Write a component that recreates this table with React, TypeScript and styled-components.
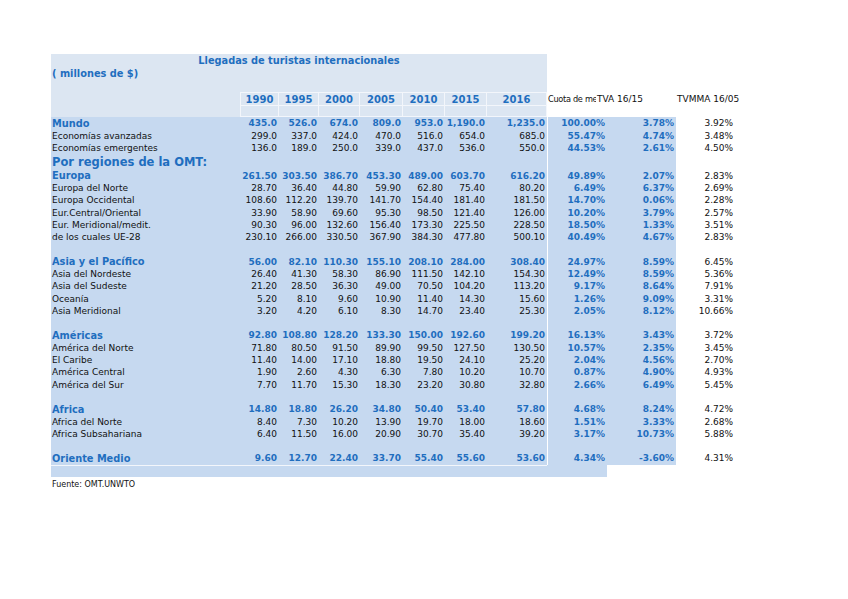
import React from 'react';
import styled, { createGlobalStyle, css } from 'styled-components';

const GlobalStyle = createGlobalStyle`
  html, body { margin: 0; padding: 0; background: #ffffff; }
  body { font-family: "DejaVu Sans", "Noto Sans", sans-serif; color: #111; }
`;

const LIGHT = '#dce6f2';
const DARK = '#c6d9f0';
const BLUE = '#1f6ebf';
const LINE = '#f3f6fb';
const COLS = '189px 39px 40px 41px 43px 42px 42px 60px 60px 69px 59px';

const Page = styled.div`
  padding: 54px 0 40px 51px;
  width: 760px;
`;

const TitleBlock = styled.div`
  width: 496px;
  background: ${LIGHT};
  display: flex;
  flex-direction: column;
`;

const TitleLine = styled.div`
  height: 13px;
  line-height: 13px;
  text-align: center;
  font-size: 9.8px;
  font-weight: bold;
  color: ${BLUE};
  white-space: nowrap;
`;

const UnitLine = styled.div`
  height: 13px;
  line-height: 13px;
  padding-left: 1px;
  font-size: 9.8px;
  font-weight: bold;
  color: ${BLUE};
  white-space: nowrap;
`;

const Spacer = styled.div`
  height: 12px;
`;

const GridRow = styled.div<{ $h: number }>`
  display: grid;
  grid-template-columns: ${COLS};
  height: ${(p) => p.$h}px;
`;

const HeadLabel = styled.div`
  background: ${LIGHT};
`;

const YearHead = styled.div<{ $first?: boolean; $sub?: boolean }>`
  background: ${LIGHT};
  border-top: 1px solid ${LINE};
  border-right: 1px solid ${LINE};
  ${(p) => p.$first && css`border-left: 1px solid ${LINE};`}
  ${(p) => p.$sub && css`border-bottom: 1px solid ${LINE};`}
  display: flex;
  align-items: center;
  justify-content: center;
  font-size: 10px;
  font-weight: bold;
  color: ${BLUE};
`;

const ColHead = styled.div<{ $shift?: number; $clip?: number }>`
  display: flex;
  align-items: center;
  font-size: 9px;
  color: #111;
  white-space: nowrap;
  padding-left: 1px;
  margin-left: ${(p) => (p.$shift ? `${p.$shift}px` : '0')};
  ${(p) =>
    p.$clip &&
    css`
      width: ${p.$clip}px;
      overflow: hidden;
      font-size: 8.2px;
      letter-spacing: -0.3px;
    `}
`;

const Cell = styled.div<{
  $bg?: boolean;
  $right?: boolean;
  $strong?: boolean;
  $divider?: boolean;
  $size?: number;
}>`
  display: flex;
  align-items: center;
  justify-content: ${(p) => (p.$right ? 'flex-end' : 'flex-start')};
  padding: ${(p) => (p.$right ? '0 2px 0 0' : '0 0 0 1px')};
  background: ${(p) => (p.$bg ? DARK : 'transparent')};
  ${(p) => p.$divider && css`border-left: 1px solid #ffffff;`}
  font-size: ${(p) => p.$size ?? 9}px;
  font-weight: ${(p) => (p.$strong ? 'bold' : 'normal')};
  color: ${(p) => (p.$strong ? BLUE : '#111')};
  white-space: nowrap;
  overflow: visible;
`;

const BandCell = styled.div<{ $line?: boolean }>`
  background: ${DARK};
  ${(p) => p.$line && css`border-top: 1px solid ${LINE};`}
`;

const Source = styled.div`
  height: 13px;
  display: flex;
  align-items: center;
  padding-left: 1px;
  margin-top: 1px;
  font-size: 8px;
  color: #111;
`;

type Kind = 'main' | 'sub' | 'section' | 'blank';
interface Row {
  kind: Kind;
  label?: string;
  vals?: string[];
  cuota?: string;
  tva?: string;
  tvmma?: string;
  h: number;
}

const R = 12.3;
const mk = (
  kind: Kind,
  label: string,
  v: string,
  cuota: string,
  tva: string,
  tvmma: string,
  h = R
): Row => ({ kind, label, vals: v.split(' '), cuota, tva, tvmma, h });
const blank = (): Row => ({ kind: 'blank', h: R });

const rows: Row[] = [
  mk('main', 'Mundo', '435.0 526.0 674.0 809.0 953.0 1,190.0 1,235.0', '100.00%', '3.78%', '3.92%', 12.6),
  mk('sub', 'Economías avanzadas', '299.0 337.0 424.0 470.0 516.0 654.0 685.0', '55.47%', '4.74%', '3.48%', 12.6),
  mk('sub', 'Economías emergentes', '136.0 189.0 250.0 339.0 437.0 536.0 550.0', '44.53%', '2.61%', '4.50%', 12.6),
  { kind: 'section', label: 'Por regiones de la OMT:', h: 14.7 },
  mk('main', 'Europa', '261.50 303.50 386.70 453.30 489.00 603.70 616.20', '49.89%', '2.07%', '2.83%'),
  mk('sub', 'Europa del Norte', '28.70 36.40 44.80 59.90 62.80 75.40 80.20', '6.49%', '6.37%', '2.69%'),
  mk('sub', 'Europa Occidental', '108.60 112.20 139.70 141.70 154.40 181.40 181.50', '14.70%', '0.06%', '2.28%'),
  mk('sub', 'Eur.Central/Oriental', '33.90 58.90 69.60 95.30 98.50 121.40 126.00', '10.20%', '3.79%', '2.57%'),
  mk('sub', 'Eur. Meridional/medit.', '90.30 96.00 132.60 156.40 173.30 225.50 228.50', '18.50%', '1.33%', '3.51%'),
  mk('sub', 'de los cuales UE-28', '230.10 266.00 330.50 367.90 384.30 477.80 500.10', '40.49%', '4.67%', '2.83%'),
  blank(),
  mk('main', 'Asia y el Pacífico', '56.00 82.10 110.30 155.10 208.10 284.00 308.40', '24.97%', '8.59%', '6.45%'),
  mk('sub', 'Asia del Nordeste', '26.40 41.30 58.30 86.90 111.50 142.10 154.30', '12.49%', '8.59%', '5.36%'),
  mk('sub', 'Asia del Sudeste', '21.20 28.50 36.30 49.00 70.50 104.20 113.20', '9.17%', '8.64%', '7.91%'),
  mk('sub', 'Oceanía', '5.20 8.10 9.60 10.90 11.40 14.30 15.60', '1.26%', '9.09%', '3.31%'),
  mk('sub', 'Asia Meridional', '3.20 4.20 6.10 8.30 14.70 23.40 25.30', '2.05%', '8.12%', '10.66%'),
  blank(),
  mk('main', 'Américas', '92.80 108.80 128.20 133.30 150.00 192.60 199.20', '16.13%', '3.43%', '3.72%'),
  mk('sub', 'América del Norte', '71.80 80.50 91.50 89.90 99.50 127.50 130.50', '10.57%', '2.35%', '3.45%'),
  mk('sub', 'El Caribe', '11.40 14.00 17.10 18.80 19.50 24.10 25.20', '2.04%', '4.56%', '2.70%'),
  mk('sub', 'América Central', '1.90 2.60 4.30 6.30 7.80 10.20 10.70', '0.87%', '4.90%', '4.93%'),
  mk('sub', 'América del Sur', '7.70 11.70 15.30 18.30 23.20 30.80 32.80', '2.66%', '6.49%', '5.45%'),
  blank(),
  mk('main', 'Africa', '14.80 18.80 26.20 34.80 50.40 53.40 57.80', '4.68%', '8.24%', '4.72%'),
  mk('sub', 'Africa del Norte', '8.40 7.30 10.20 13.90 19.70 18.00 18.60', '1.51%', '3.33%', '2.68%'),
  mk('sub', 'Africa Subsahariana', '6.40 11.50 16.00 20.90 30.70 35.40 39.20', '3.17%', '10.73%', '5.88%'),
  blank(),
  mk('main', 'Oriente Medio', '9.60 12.70 22.40 33.70 55.40 55.60 53.60', '4.34%', '-3.60%', '4.31%'),
];

const YEARS = ['1990', '1995', '2000', '2005', '2010', '2015', '2016'];

const DataRow: React.FC<{ row: Row }> = ({ row }) => {
  const main = row.kind === 'main';
  if (row.kind === 'section') {
    return (
      <GridRow $h={row.h}>
        <Cell $bg $strong $size={11.5}>{row.label}</Cell>
        {YEARS.map((y) => (
          <Cell key={y} $bg />
        ))}
        <Cell $bg $divider />
        <Cell $bg />
        <Cell />
      </GridRow>
    );
  }
  const vals = row.vals ?? YEARS.map(() => '');
  return (
    <GridRow $h={row.h}>
      <Cell $bg $strong={main} $size={main ? 9.8 : 9}>
        {row.label ?? ''}
      </Cell>
      {vals.map((v, i) => (
        <Cell key={i} $bg $right $strong={main}>
          {v}
        </Cell>
      ))}
      <Cell $bg $right $strong $divider>
        {row.cuota ?? ''}
      </Cell>
      <Cell $bg $right $strong>
        {row.tva ?? ''}
      </Cell>
      <Cell $right>{row.tvmma ?? ''}</Cell>
    </GridRow>
  );
};

export default function App() {
  return (
    <>
      <GlobalStyle />
      <Page>
        <TitleBlock>
          <TitleLine>Llegadas de turistas internacionales</TitleLine>
          <UnitLine>( millones de $)</UnitLine>
          <Spacer />
        </TitleBlock>
        <GridRow $h={13}>
          <HeadLabel />
          {YEARS.map((y, i) => (
            <YearHead key={y} $first={i === 0}>
              {y}
            </YearHead>
          ))}
          <ColHead $clip={48}>Cuota de mercado</ColHead>
          <ColHead $shift={-11}>TVA 16/15</ColHead>
          <ColHead>TVMMA 16/05</ColHead>
        </GridRow>
        <GridRow $h={12}>
          <HeadLabel />
          {YEARS.map((y, i) => (
            <YearHead key={y} $first={i === 0} $sub />
          ))}
        </GridRow>
        {rows.map((r, i) => (
          <DataRow key={i} row={r} />
        ))}
        <GridRow $h={12.3}>
          {Array.from({ length: 8 }).map((_, i) => (
            <BandCell key={i} $line />
          ))}
          <BandCell />
        </GridRow>
        <Source>Fuente: OMT.UNWTO</Source>
      </Page>
    </>
  );
}
